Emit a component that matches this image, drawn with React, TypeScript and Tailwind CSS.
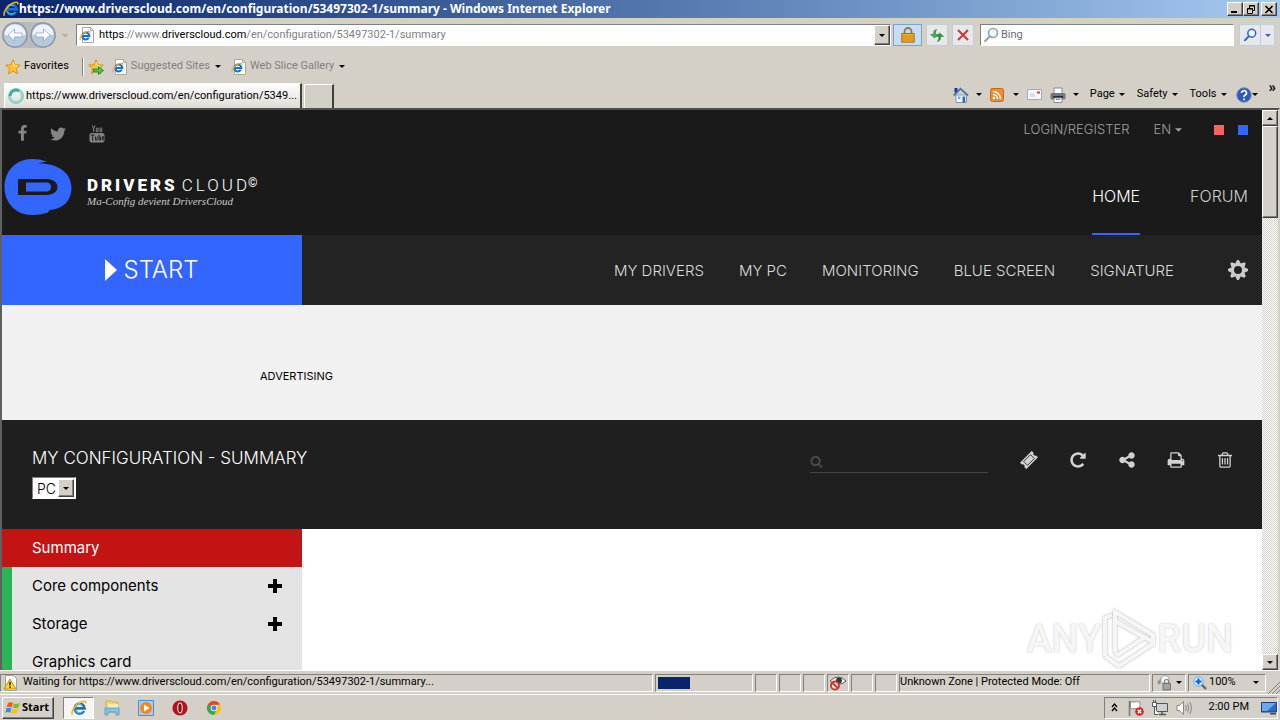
import type { ReactNode } from "react";

const UI = "font-['Roboto','Liberation_Sans',sans-serif]";
const WEB = "font-['Inter','Liberation_Sans',sans-serif]";
const RAISED = "border border-t-white border-l-white border-r-[#404040] border-b-[#404040] bg-[#d4d0c8] shadow-[inset_-1px_-1px_0_#808080]";
const SUNKEN = "border border-t-[#808080] border-l-[#808080] border-r-white border-b-white";

function Caret({ className = "" }: { className?: string }) {
  return (
    <svg viewBox="0 0 6 3" className={"h-[3px] w-[6px] shrink-0 " + className} fill="currentColor" aria-hidden="true">
      <path d="M0 0h6L3 3z" />
    </svg>
  );
}

function Glyph({ d, className }: { d: string; className: string }) {
  return (
    <svg viewBox="0 0 1792 1792" className={className} fill="currentColor" aria-hidden="true">
      <path d={d} />
    </svg>
  );
}

const FACEBOOK = "M1343 12v264h-157q-86 0-116 36t-30 108v189h293l-39 296h-254v759h-306v-759h-255v-296h255v-218q0-186 104-288.5t277-102.5q147 0 228 12z";
const TWITTER = "M1684 408q-67 98-162 167 1 14 1 42 0 130-38 259.5t-115.5 248.5-184.5 210.5-258 146-323 54.5q-271 0-496-145 35 4 78 4 225 0 401-138-105-2-188-64.5t-114-159.5q33 5 61 5 43 0 85-11-112-23-185.5-111.5t-73.5-205.5v-4q68 38 146 41-66-44-105-115t-39-154q0-88 44-163 121 149 294.5 238.5t371.5 99.5q-8-38-8-74 0-134 94.5-228.5t228.5-94.5q140 0 236 102 109-21 205-78-37 115-142 178 93-10 186-50z";
const REPEAT = "M1664 256v448q0 26-19 45t-45 19h-448q-42 0-59-40-17-39 14-69l138-138q-148-137-349-137-104 0-198.5 40.5t-163.5 109.5-109.5 163.5-40.5 198.5 40.5 198.5 109.5 163.5 163.5 109.5 198.5 40.5q119 0 225-52t179-147q7-10 23-12 15 0 25 9l137 138q9 8 9.5 20.5t-7.5 22.5q-109 132-264 204.5t-327 72.5q-156 0-298-61t-245-164-164-245-61-298 61-298 164-245 245-164 298-61q147 0 284.5 55.5t244.5 156.5l130-129q29-31 70-14 39 17 39 59z";
const SHARE = "M1344 1024q133 0 226.5 93.5t93.5 226.5-93.5 226.5-226.5 93.5-226.5-93.5-93.5-226.5q0-12 2-34l-360-180q-92 86-218 86-133 0-226.5-93.5t-93.5-226.5 93.5-226.5 226.5-93.5q126 0 218 86l360-180q-2-22-2-34 0-133 93.5-226.5t226.5-93.5 226.5 93.5 93.5 226.5-93.5 226.5-226.5 93.5q-126 0-218-86l-360 180q2 22 2 34t-2 34l360 180q92-86 218-86z";
const PRINT = "M448 1536h896v-256h-896v256zm0-640h896v-384h-160q-40 0-68-28t-28-68v-160h-640v640zm1152 64q0-26-19-45t-45-19-45 19-19 45 19 45 45 19 45-19 19-45zm128 0v416q0 13-9.5 22.5t-22.5 9.5h-224v160q0 40-28 68t-68 28h-960q-40 0-68-28t-28-68v-160h-224q-13 0-22.5-9.5t-9.5-22.5v-416q0-79 56.5-135.5t135.5-56.5h64v-544q0-40 28-68t68-28h672q40 0 88 20t76 48l152 152q28 28 48 76t20 88v256h64q79 0 135.5 56.5t56.5 135.5z";
const TRASH = "M704 736v576q0 14-9 23t-23 9h-64q-14 0-23-9t-9-23v-576q0-14 9-23t23-9h64q14 0 23 9t9 23zm256 0v576q0 14-9 23t-23 9h-64q-14 0-23-9t-9-23v-576q0-14 9-23t23-9h64q14 0 23 9t9 23zm256 0v576q0 14-9 23t-23 9h-64q-14 0-23-9t-9-23v-576q0-14 9-23t23-9h64q14 0 23 9t9 23zm128 724v-948h-896v948q0 22 7 40.5t14.5 27 10.5 8.5h832q3 0 10.5-8.5t14.5-27 7-40.5zm-672-1076h448l-48-117q-7-9-17-11h-317q-10 2-17 11zm928 32v64q0 14-9 23t-23 9h-96v948q0 83-47 143.5t-113 60.5h-832q-66 0-113-58.5t-47-141.5v-952h-96q-14 0-23-9t-9-23v-64q0-14 9-23t23-9h309l70-167q15-37 54-63t79-26h320q40 0 79 26t54 63l70 167h309q14 0 23 9t9 23z";
const SEARCH = "M1216 832q0-185-131.5-316.5t-316.5-131.5-316.5 131.5-131.5 316.5 131.5 316.5 316.5 131.5 316.5-131.5 131.5-316.5zm512 832q0 52-38 90t-90 38q-54 0-90-38l-343-342q-179 124-399 124-143 0-273.5-55.5t-225-150-150-225-55.5-273.5 55.5-273.5 150-225 225-150 273.5-55.5 273.5 55.5 225 150 150 225 55.5 273.5q0 220-124 399l343 343q37 37 37 90z";

function IELogo({ className = "h-4 w-4" }: { className?: string }) {
  return (
    <svg viewBox="0 0 16 16" className={"shrink-0 " + className} fill="none" aria-hidden="true">
      <path d="M13 11a5 5 0 1 1 .6-2.6H5" stroke="#1b6fd0" strokeWidth="2.6" />
      <path d="M12 10.8a4.5 4.5 0 0 1-8-.6M4 6.5a4.6 4.6 0 0 1 7-1.4" stroke="#7cc9ff" strokeWidth=".9" />
      <path d="M1.5 14.8C-.5 12 4.500 4.500 10 2c3-1.400 5.500-1.200 4.600 1.400" stroke="#f2b61c" strokeWidth="1.500" />
    </svg>
  );
}

function IEPage() {
  return (
    <svg viewBox="0 0 16 16" className="h-4 w-4 shrink-0" fill="none" aria-hidden="true">
      <path d="M3.500 .5h8l3 3v12h-11z" fill="#fff" stroke="#a8a8a8" />
      <path d="M11.500 .5v3h3" stroke="#a8a8a8" />
      <path d="M9.800 10.800a3.500 3.500 0 1 1 .5-1.900H4" stroke="#1b6fd0" strokeWidth="2" />
      <path d="M1.200 12.800c-1-2 2.800-6.500 6.300-8 2-.8 3.800-.6 3.200.9" stroke="#e9ae20" strokeWidth="1.200" />
    </svg>
  );
}

function Star({ add = false }: { add?: boolean }) {
  return (
    <svg viewBox="0 0 16 16" className="h-4 w-4 shrink-0" aria-hidden="true">
      <path d="M8 .8l2 4.900 5.300.4-4 3.500 1.300 5.200L8 12l-4.600 2.800 1.300-5.200-4-3.500L6 5.700z" fill="#fdc52f" stroke="#d98a10" strokeWidth=".9" />
      <path d="M8 3l1.200 3.600 3.300.3" fill="none" stroke="#fff2a8" />
      {add && <path d="M5.500 10h5V7.500l5 4-5 4V13h-5z" fill="#45c64a" stroke="#16812a" strokeWidth=".8" />}
    </svg>
  );
}

function RoundArrow({ flip = false }: { flip?: boolean }) {
  return (
    <svg viewBox="0 0 26 26" className={flip ? "h-[26px] w-[26px] rotate-180" : "h-[26px] w-[26px]"} aria-hidden="true">
      <circle cx="13" cy="13" r="12" fill="#c3d0e0" stroke="#8d94a1" strokeWidth="1.500" />
      <path d="M2.500 13a10.500 10.500 0 0 1 21 0q-10 3-21 0z" fill={flip ? "#b4c8de" : "#eef3f9"} />
      <path d="M2.500 13a10.500 10.500 0 0 0 21 0q-10 3-21 0z" fill={flip ? "#eef3f9" : "#b4c8de"} />
      <path d="M6 13l6.500-6v4H20v4h-7.500v4z" fill="#fff" stroke="#8fa3bb" strokeWidth=".8" />
    </svg>
  );
}

function Magnifier({ color, className }: { color: string; className: string }) {
  return (
    <svg viewBox="0 0 16 16" className={"shrink-0 " + className} fill="none" aria-hidden="true">
      <circle cx="10" cy="6" r="4.500" fill="#eef7ff" stroke={color} strokeWidth="1.700" />
      <path d="M6.800 9.300L1.500 14.700" stroke={color} strokeWidth="2.300" />
    </svg>
  );
}

function TitleBar() {
  return (
    <header className="flex h-[18px] shrink-0 items-center justify-between bg-linear-to-r from-[#0a246a] to-[#a6caf0] pr-[3px] pl-[3px]">
      <h1 className="flex items-center text-[12px] leading-4 font-bold whitespace-nowrap text-white font-['Noto_Sans',sans-serif]">
        <IELogo />
        https://www.driverscloud.com/en/configuration/53497302-1/summary - Windows Internet Explorer
      </h1>
      <div className="flex text-black">
        <button aria-label="Minimize" className={"flex h-[14px] w-4 items-center justify-center " + RAISED}>
          <svg viewBox="0 0 10 9" className="h-[9px] w-[10px]"><path d="M1 6h6v2H1z" /></svg>
        </button>
        <button aria-label="Restore" className={"flex h-[14px] w-4 items-center justify-center " + RAISED}>
          <svg viewBox="0 0 10 9" className="h-[9px] w-[10px]" fill="none" stroke="#000"><path d="M3.500 3V.5h5v5H7M3 1h6M1.500 3.500h5v5h-5zM1 4h6" /></svg>
        </button>
        <button aria-label="Close" className={"ml-[2px] flex h-[14px] w-4 items-center justify-center " + RAISED}>
          <svg viewBox="0 0 10 9" className="h-[9px] w-[10px]" fill="none" stroke="#000" strokeWidth="1.600"><path d="M1.500 1l7 7M8.500 1l-7 7" /></svg>
        </button>
      </div>
    </header>
  );
}

function NavBar() {
  const btn = "flex h-[22px] items-center justify-center border border-[#c5ccd6] bg-[#e6e8ec]";
  return (
    <div className="flex h-[34px] shrink-0 items-center pr-[5px] pl-[2px]">
      <div className="flex gap-[2px] rounded-full bg-[#b9bac0]">
        <button aria-label="Back"><RoundArrow /></button>
        <button aria-label="Forward"><RoundArrow flip /></button>
      </div>
      <button aria-label="Recent pages" className="mr-2 ml-[6px] text-[#b4b0a8]"><Caret className="scale-125" /></button>
      <div className={"flex h-[22px] min-w-0 flex-1 items-center bg-white pl-[2px] " + SUNKEN}>
        <IEPage />
        <div role="textbox" aria-label="Address" tabIndex={0} className="ml-1 flex-1 truncate text-[11px] text-[#808080]">
          <span className="text-black">https</span>://www.<span className="text-black">driverscloud.com</span>/en/configuration/53497302-1/summary
        </div>
        <button aria-label="Show addresses" className={"flex h-5 w-4 items-center justify-center " + RAISED}><Caret /></button>
      </div>
      <button aria-label="Security report" className="ml-[2px] flex h-[22px] w-[29px] items-center justify-center border border-[#7da2ce] bg-[#c6dcf7]">
        <svg viewBox="0 0 14 16" className="h-4 w-[14px]">
          <path d="M3.500 7V4.500a3.500 3.500 0 0 1 7 0V7" fill="none" stroke="#8b7a50" strokeWidth="1.800" />
          <path d="M.8 6.500h12.400v8.700H.8z" fill="#f0b02c" stroke="#a86d0c" />
          <path d="M1.500 9h11M1.500 11h11M1.500 13h11" stroke="#c4810f" strokeWidth=".8" />
        </svg>
      </button>
      <button aria-label="Refresh" className={"ml-1 w-[22px] " + btn}>
        <svg viewBox="0 0 16 16" className="h-4 w-4" aria-hidden="true">
          <path d="M7.500 2.500q-3.500.5-3 5H1.500L5.700 11 9 7.500H6.500q-.3-3 1-5z" fill="#4fae4f" stroke="#1f7f2b" strokeWidth=".6" />
          <path d="M8.500 14.500q3.500-.5 3-5h3L10.700 6 7.500 9.500H10q.3 3-1.500 5z" fill="#2f9438" stroke="#1f7f2b" strokeWidth=".6" />
        </svg>
      </button>
      <button aria-label="Stop" className={"ml-1 w-[22px] " + btn}>
        <svg viewBox="0 0 12 12" className="h-3 w-3" stroke="#cf3535" strokeWidth="2"><path d="M1 1l10 10M11 1L1 11" /></svg>
      </button>
      <label className={"ml-[6px] flex h-[22px] w-[254px] items-center gap-[2px] bg-white px-[2px] " + SUNKEN}>
        <Magnifier color="#9aa5b2" className="h-4 w-4" />
        <input aria-label="Search Bing" placeholder="Bing" className="min-w-0 flex-1 text-[11px] outline-none placeholder:text-[#6d6d6d]" />
      </label>
      <button aria-label="Search" className={"ml-[5px] w-[22px] " + btn}><Magnifier color="#2f64c4" className="h-[14px] w-[14px]" /></button>
      <button aria-label="Search options" className={"w-[14px] border-l-0 text-[#2f64c4] " + btn}><Caret /></button>
    </div>
  );
}

function FavoritesBar() {
  return (
    <div className="flex h-[29px] shrink-0 items-center pl-[5px] text-[11px]">
      <button className="flex items-center gap-[3px]"><Star /> Favorites</button>
      <div className="mr-[4px] ml-[13px] h-[18px] w-[2px] border-l border-[#808080] bg-white" />
      <button aria-label="Add to favorites bar"><Star add /></button>
      <button className="ml-2 flex items-center gap-[3px] text-[#808080]"><IEPage /> Suggested Sites <Caret className="ml-[2px] text-black" /></button>
      <button className="ml-[10px] flex items-center gap-[3px] text-[#808080]"><IEPage /> Web Slice Gallery <Caret className="ml-[2px] text-black" /></button>
    </div>
  );
}

function TabBar() {
  return (
    <div className="flex h-[27px] shrink-0 items-end pr-1 pl-1 text-[11px]">
      <button className="flex h-[25px] w-[298px] items-center gap-[2px] border border-t-white border-r-2 border-b-0 border-l-white border-r-[#404040] bg-linear-to-b from-white to-[#dedbd5] pl-[3px]">
        <svg viewBox="0 0 16 16" className="h-4 w-4 shrink-0" fill="none" aria-hidden="true">
          <circle cx="8" cy="8" r="6" stroke="#a5ddd5" strokeWidth="3" />
          <path d="M2 8a6 6 0 0 1 9-5" stroke="#3cae9d" strokeWidth="2.500" />
          <circle cx="8" cy="8" r="7.300" stroke="#4d9f96" strokeWidth=".6" />
        </svg>
        <span className="whitespace-nowrap">https://www.driverscloud.com/en/configuration/5349...</span>
      </button>
      <button aria-label="New tab" className="ml-[2px] h-6 w-[30px] border border-t-white border-r-2 border-b-0 border-l-white border-r-[#404040] bg-[#d4d0c8]" />
      <div className="ml-auto flex h-full items-center gap-[6px]">
        <button aria-label="Home" className="flex items-center gap-[7px]">
          <svg viewBox="0 0 16 16" className="h-4 w-4"><path d="M3 8h10.500v7.500H3z" fill="#f4f8fc" stroke="#8a96a8" /><path d="M.8 8.500L7.500 1.700 15 8.500" fill="none" stroke="#4d74ad" strokeWidth="1.800" /><path d="M1.500 1h3v3l-3 2z" fill="#26359b" /><path d="M9.500 9.500h2.700v6H9.500z" fill="#3668a8" /><path d="M5 9.500h2.500V12H5z" fill="#79a7d8" /></svg>
          <Caret />
        </button>
        <button aria-label="Feeds" className="ml-[2px] flex items-center gap-[9px]">
          <svg viewBox="0 0 14 14" className="h-[14px] w-[14px]" fill="none" stroke="#fff" strokeWidth="1.500"><rect x=".5" y=".5" width="13" height="13" rx="2" fill="#f08a33" stroke="#c76615" strokeWidth="1" /><path d="M3 6.500A4.500 4.500 0 0 1 7.500 11M3 3.500A7.500 7.500 0 0 1 10.500 11" /><circle cx="4" cy="10" r=".6" fill="#fff" /></svg>
          <Caret />
        </button>
        <button aria-label="Read mail" className="ml-[2px]">
          <svg viewBox="0 0 15 11" className="h-[11px] w-[15px]"><path d="M.5.500h14v10H.5z" fill="#f5f6f9" stroke="#a6a9b1" /><path d="M10 2.500h3v2h-3z" fill="#c63b55" /><path d="M3 5h4M3 7h5" stroke="#b9c4dd" /></svg>
        </button>
        <button aria-label="Print" className="ml-[2px] flex items-center gap-[7px]">
          <svg viewBox="0 0 16 16" className="h-4 w-4"><path d="M4 1h8v6H4z" fill="#fff" stroke="#8c8c8c" /><rect x=".5" y="6" width="15" height="6.500" rx="1.500" fill="#727781" /><path d="M3 9h10v2H3z" fill="#282c33" /><path d="M4 11h8v4.500H4z" fill="#fff" stroke="#8c8c8c" /><path d="M6 12.500h4" stroke="#5c93cf" /></svg>
          <Caret />
        </button>
        <button className="ml-[5px] flex items-center gap-1">Page <Caret /></button>
        <button className="ml-[6px] flex items-center gap-1">Safety <Caret /></button>
        <button className="ml-[6px] flex items-center gap-1">Tools <Caret /></button>
        <button aria-label="Help" className="ml-[3px] flex items-center">
          <svg viewBox="0 0 16 16" className="h-4 w-4"><circle cx="8" cy="8" r="7.200" fill="#3159b5" stroke="#6f84b5" /><path d="M5.500 6a2.500 2.300 0 1 1 3.600 2.100Q8 8.600 8 10M8 11.500v1.800" fill="none" stroke="#fff" strokeWidth="1.700" /></svg>
          <Caret />
        </button>
        <button aria-label="More commands" className="ml-[5px] self-start text-[15px] leading-3 font-bold">»</button>
      </div>
    </div>
  );
}

function BrandLogo() {
  return (
    <a href="#home" className="flex items-center gap-[15px] text-white">
      <svg viewBox="0 0 68 56" className="h-14 w-[68px]" aria-hidden="true">
        <path d="M28 0C34 0 38 .8 42.500 2.500L34 4.500C54 4 67.500 14 67.500 29c0 12-8 21-21.500 22l-4.500 1.500 6-4.500-3.500 5.500C39 55.200 34 56 28 56 12 56 .5 44 .5 28S12 0 28 0z" fill="#36f" />
        <path d="M14 20h28c8 0 11.500 4 11.500 8S50 36 42 36H14z" fill="#1a1a1a" />
        <path d="M22 23.500h20c3.500 0 5 2 5 4.500s-1.500 4.500-5 4.500H22z" fill="#36f" />
      </svg>
      <span className="flex flex-col pt-2">
        <span className="flex items-start gap-1 text-[17px] leading-5 font-['Roboto','Liberation_Sans',sans-serif]">
          <b className="font-black tracking-[3px]">DRIVERS</b>
          <span className="font-light tracking-[3px]">CLOUD</span>
          <span className="-ml-[6px] text-[12px] leading-4">©</span>
        </span>
        <span className="text-[11px] leading-3 text-[#c9c9c9] italic font-['Liberation_Serif',serif]">Ma-Config devient DriversCloud</span>
      </span>
    </a>
  );
}

function SiteHeader() {
  return (
    <div className="flex h-[125px] shrink-0 justify-between bg-[#1a1a1a] pr-[14px]">
      <div className="flex flex-col pt-[15px] pl-[2px]">
        <div className="mb-[17px] flex h-[17px] items-center pl-[10px] text-[#858585]">
          <a href="#facebook" aria-label="Facebook"><Glyph d={FACEBOOK} className="h-[17px] w-[17px]" /></a>
          <a href="#twitter" aria-label="Twitter" className="ml-[18px]"><Glyph d={TWITTER} className="h-[18px] w-[18px]" /></a>
          <a href="#youtube" aria-label="YouTube" className="ml-[22px]">
            <svg viewBox="0 0 16 18" className="h-[18px] w-4" aria-hidden="true">
              <path d="M3.300.5l1.300 3.500v3M6 .5L4.600 4M7.300 3.200h1.800V6.500H7.300zM11 2.500v4h1.700v-4" fill="none" stroke="currentColor" />
              <rect x=".5" y="8" width="15" height="9.500" rx="2" fill="currentColor" />
              <path d="M2 10h3.500M3.700 10v6M6.500 11.500V15h1.700v-3.500M10 9.500V15h1.500v-3H10M15 15h-1.700v-3.300h1.400v1.600h-1.400" fill="none" stroke="#1a1a1a" strokeWidth=".9" />
            </svg>
          </a>
        </div>
        <BrandLogo />
      </div>
      <div className="flex flex-col items-end">
        <div className="flex h-10 items-center text-[13px] font-light text-[#a0a0a0]">
          <a href="#login">LOGIN/REGISTER</a>
          <button className="ml-6 flex items-center gap-1">EN <Caret className="h-[4px] w-[7px]" /></button>
          <button aria-label="Red theme" className="ml-8 h-[10px] w-[10px] bg-[#ff6163]" />
          <button aria-label="Blue theme" className="ml-[14px] h-[10px] w-[10px] bg-[#36f]" />
        </div>
        <nav className="flex flex-1 gap-[50px] text-[16px] leading-5 font-light text-[#d0d0d0]">
          <a href="#home" className="border-b-2 border-[#36f] pt-9 text-white">HOME</a>
          <a href="#forum" className="pt-9">FORUM</a>
        </nav>
      </div>
    </div>
  );
}

function MainMenu() {
  const items = ["MY DRIVERS", "MY PC", "MONITORING", "BLUE SCREEN", "SIGNATURE"];
  return (
    <div className="flex h-[70px] shrink-0 items-stretch justify-between bg-[#232323] pr-[14px]">
      <button className="flex w-[300px] items-center justify-center gap-[6px] bg-[#36f] text-[24px] font-light text-white">
        <svg viewBox="0 0 12 22" className="h-[22px] w-3" fill="currentColor" aria-hidden="true"><path d="M0 0l12 11L0 22z" /></svg>
        START
      </button>
      <nav className="flex items-center gap-[35px] text-[15px] font-light text-[#dcdcdc]">
        {items.map((t) => <a key={t} href="#menu" className="pt-[2px]">{t}</a>)}
        <button aria-label="Settings" className="ml-[19px] text-[#ccc]">
          <svg viewBox="-10 -10 20 20" className="h-5 w-5" aria-hidden="true">
            <circle r="5.600" fill="none" stroke="currentColor" strokeWidth="3.200" />
            {[0, 45, 90, 135, 180, 225, 270, 315].map((a) => (
              <path key={a} d="M-2.700-6.500L-.9-10H.9L2.700-6.500z" transform={`rotate(${a})`} fill="currentColor" />
            ))}
          </svg>
        </button>
      </nav>
    </div>
  );
}

function ConfigHeader() {
  return (
    <div className="flex h-[109px] shrink-0 items-start justify-between bg-[#1f1f1f] pr-7 pl-[30px]">
      <div className="pt-7">
        <h2 className="text-[17px] leading-5 font-light text-white">MY CONFIGURATION - SUMMARY</h2>
        <div className="relative mt-[9px] h-[22px] w-11">
          <select aria-label="Device" className={"block h-[22px] w-full appearance-none bg-white pl-1 text-[14px] text-black font-light " + SUNKEN}>
            <option>PC</option>
          </select>
          <span className={"pointer-events-none absolute top-[2px] right-[2px] flex h-[18px] w-4 items-center justify-center " + RAISED}><Caret /></span>
        </div>
      </div>
      <div className="flex items-start text-[#d2d2d2]">
        <label className="mt-[31px] mr-8 flex h-[22px] w-[178px] items-center border-b border-[#454545] text-[#4c4c4c]">
          <Glyph d={SEARCH} className="h-[13px] w-[13px]" />
          <input aria-label="Search configuration" className="min-w-0 flex-1 outline-none" />
        </label>
        <div className="mt-[31px] flex gap-[31px]">
          <button aria-label="Tickets">
            <svg viewBox="0 0 18 18" className="h-[18px] w-[18px]" aria-hidden="true">
              <g transform="rotate(-45 9 9)">
                <path d="M.7 4.500h16.600v2.700a1.900 1.900 0 0 0 0 3.600v2.700H.7v-2.700a1.900 1.900 0 0 0 0-3.600z" fill="currentColor" />
                <path d="M4.200 6.300h9.600v5.400H4.200z" fill="none" stroke="#1f1f1f" strokeWidth=".8" />
              </g>
            </svg>
          </button>
          <button aria-label="Reload"><Glyph d={REPEAT} className="h-[18px] w-[18px]" /></button>
          <button aria-label="Share"><Glyph d={SHARE} className="h-[18px] w-[18px]" /></button>
          <button aria-label="Print configuration"><Glyph d={PRINT} className="h-[18px] w-[18px]" /></button>
          <button aria-label="Delete"><Glyph d={TRASH} className="h-[18px] w-[18px]" /></button>
        </div>
      </div>
    </div>
  );
}

function Watermark() {
  return (
    <div className="absolute right-[29px] bottom-0 flex items-center text-[38px] leading-[58px] font-medium text-[#f6f6f6] font-['Roboto',sans-serif] [text-shadow:0_0_2px_#bbb]">
      <span>ANY</span>
      <svg viewBox="0 0 56 62" className="h-[62px] w-14 overflow-visible drop-shadow-[0_0_1px_#aaa]" fill="none" stroke="#f6f6f6" strokeWidth="4" aria-hidden="true">
        <path d="M4 48V10l7-3M4 48l14 10 35-23" />
        <path d="M14 44V4l38 23v7L14 13M14 44l3 3 27-18" />
      </svg>
      <span>RUN</span>
    </div>
  );
}

function Body() {
  const items = [
    { name: "Core components", more: true },
    { name: "Storage", more: true },
    { name: "Graphics card", more: false },
  ];
  return (
    <div className="relative flex min-h-0 flex-1 overflow-hidden bg-white">
      <ul className="w-[300px] shrink-0 text-[15px] text-black">
        <li className="h-[38px] bg-[#c41313]"><a href="#summary" className="flex h-full items-center pl-[30px] text-white">Summary</a></li>
        {items.map((i) => (
          <li key={i.name} className="flex h-[38px] items-center justify-between border-l-10 border-[#2bb457] bg-[#e4e4e4] pr-5 pl-5">
            <a href="#section">{i.name}</a>
            {i.more && (
              <button aria-label={"Expand " + i.name}>
                <svg viewBox="0 0 14 14" className="h-[14px] w-[14px]"><path d="M5 0h4v5h5v4H9v5H5V9H0V5h5z" /></svg>
              </button>
            )}
          </li>
        ))}
      </ul>
      <Watermark />
    </div>
  );
}

function ScrollBar() {
  return (
    <div className="flex w-4 shrink-0 flex-col bg-[repeating-conic-gradient(#fff_0_25%,#d4d0c8_0_50%)] bg-size-[2px_2px]">
      <button aria-label="Scroll up" className={"flex h-4 items-center justify-center " + RAISED}><Caret className="rotate-180" /></button>
      <div className={"h-[92px] " + RAISED} />
      <button aria-label="Scroll down" className={"mt-auto flex h-4 items-center justify-center " + RAISED}><Caret /></button>
    </div>
  );
}

function Cell({ className, children }: { className: string; children?: ReactNode }) {
  return <div className={"flex h-[18px] items-center border border-t-[#808080] border-l-[#808080] border-r-white border-b-white " + className}>{children}</div>;
}

function StatusBar() {
  return (
    <footer className="flex h-6 shrink-0 items-center gap-[2px] border-t border-white text-[11px] whitespace-nowrap">
      <Cell className="min-w-0 flex-1 gap-[4px] pl-[2px]">
        <svg viewBox="0 0 16 16" className="h-4 w-4 shrink-0"><path d="M2.500.5h8l3 3v12h-11z" fill="#fff" stroke="#a0a0a0" /><path d="M7 4l6 10H1z" fill="#ffd91f" stroke="#b89300" /><path d="M7 7v3.500M7 11.500v1.500" stroke="#000" strokeWidth="1.300" /></svg>
        Waiting for https://www.driverscloud.com/en/configuration/53497302-1/summary...
      </Cell>
      <Cell className="w-[98px] pl-[2px]"><div className="h-3 w-8 bg-[#0a246a]" /></Cell>
      <Cell className="w-[22px]" /><Cell className="w-[22px]" /><Cell className="w-[22px]" />
      <Cell className="w-[22px] justify-center">
        <svg viewBox="0 0 18 16" className="h-4 w-[18px]" fill="none"><path d="M1 6q8-8 16 0-8 7-16 0z" fill="#fff" stroke="#555" /><circle cx="10" cy="5.500" r="3" fill="#33363c" /><circle cx="6" cy="10.500" r="4" fill="#fff" fillOpacity=".7" stroke="#d42b2b" strokeWidth="1.800" /><path d="M3.200 8l5.600 5" stroke="#d42b2b" strokeWidth="1.800" /></svg>
      </Cell>
      <Cell className="w-[22px]" /><Cell className="w-[22px]" />
      <Cell className="w-[251px]">Unknown Zone | Protected Mode: Off</Cell>
      <Cell className="w-[34px] justify-between px-[3px]">
        <svg viewBox="0 0 16 16" className="h-4 w-4"><path d="M1 7l4-4 2 2-4 5z" fill="#8e9299" /><path d="M5 4a4 3.500 0 0 1 8 0v4H5z" fill="#f6f6f6" stroke="#aaa" /><path d="M8.500 8V6.500a2 2 0 0 1 4 0V8" fill="none" stroke="#777" strokeWidth="1.200" /><path d="M7 8.500h7.500V15H7z" fill="#a2a3a6" stroke="#707275" /></svg>
        <Caret />
      </Cell>
      <Cell className="w-[78px] gap-[2px] pl-[4px]">
        <svg viewBox="0 0 14 14" className="h-[14px] w-[14px]" fill="none"><path d="M8.500 8.500L13 13" stroke="#5d6470" strokeWidth="2.400" /><circle cx="5.500" cy="5.500" r="4.700" fill="#d9efff" stroke="#5da5e0" /><path d="M5.500 2.500v6M2.500 5.500h6" stroke="#0e60bd" strokeWidth="2" /></svg>
        100% <Caret className="mr-[6px] ml-auto" />
      </Cell>
      <svg viewBox="0 0 12 14" className="h-[14px] w-3 self-end" stroke="#808080" aria-hidden="true"><path d="M0 14L12 2M4 14l8-8M8 14l4-4" /></svg>
    </footer>
  );
}

function TaskBar() {
  return (
    <div className="flex h-[26px] shrink-0 items-center border-t border-white pl-[2px] text-[11px]">
      <button className={"flex h-[22px] w-[52px] items-center gap-px pl-[2px] text-[11px] font-bold font-['Noto_Sans',sans-serif] " + RAISED}>
        <svg viewBox="0 0 16 16" className="h-4 w-4 shrink-0" aria-hidden="true"><path d="M3 3q2.500-1.500 5 0L6.800 7.300q-2.500-1.300-5 0z" fill="#ef5b22" /><path d="M8.800 3.500q2.700 1.300 6-.4L13.500 7.500q-3 1.400-5.700 0z" fill="#83bb2a" /><path d="M1.500 8.300q2.500-1.300 5 0l-1.200 4.500q-2.500-1.400-5 0z" fill="#3a8cdd" /><path d="M7.500 8.500q2.700 1.400 5.700 0L12 13q-3 1.500-5.700 0z" fill="#fbc11b" /></svg>
        Start
      </button>
      <button aria-label="Internet Explorer" className={"ml-[9px] flex h-[22px] w-[31px] items-center justify-center bg-[#f6f5f3] " + SUNKEN}><IELogo /></button>
      <button aria-label="Explorer" className="ml-[10px]">
        <svg viewBox="0 0 16 16" className="h-4 w-4"><path d="M2 1h5l1 1h6v10H2z" fill="#f2d674" stroke="#c3a548" strokeWidth=".8" /><path d="M4 4h10v6H4z" fill="#fbeeb2" /><path d="M1 8h14v7h-3v-3H4v3H1z" fill="#83c1e8" stroke="#5797c4" strokeWidth=".8" /></svg>
      </button>
      <button aria-label="Media Player" className="ml-[18px]">
        <svg viewBox="0 0 16 16" className="h-4 w-4"><path d="M.5.500h15v15H.5z" fill="#a5cdf2" stroke="#4b8fce" /><circle cx="8" cy="8" r="6" fill="#f5851f" /><path d="M6 4.500l5.500 3.500L6 11.500z" fill="#fff" /></svg>
      </button>
      <button aria-label="Opera" className="ml-[18px]">
        <svg viewBox="0 0 16 16" className="h-4 w-4"><circle cx="8" cy="8" r="7.600" fill="#b5131c" /><ellipse cx="8" cy="8" rx="2.200" ry="5" fill="#7c0b12" stroke="#f3dcdc" strokeWidth="1.200" /></svg>
      </button>
      <button aria-label="Chrome" className="ml-[18px]">
        <svg viewBox="0 0 16 16" className="h-4 w-4"><circle cx="8" cy="8" r="7" fill="#fbc21a" /><path d="M8 8L1.900 4.500A7 7 0 0 1 14.100 4.500L8 5z" fill="#e24435" /><path d="M8 8L1.900 4.500A7 7 0 0 0 8 15l2.500-5z" fill="#34a455" /><circle cx="8" cy="8" r="3.300" fill="#fff" /><circle cx="8" cy="8" r="2.500" fill="#4285f4" /></svg>
      </button>
      <div className={"mr-[2px] ml-auto flex h-[22px] items-center pl-[6px] " + SUNKEN}>
        <button aria-label="Show hidden icons">
          <svg viewBox="0 0 7 9" className="h-[9px] w-[7px]" fill="none" stroke="#000" strokeWidth="1.300"><path d="M1 4l2.500-3L6 4M1 8l2.500-3L6 8" /></svg>
        </button>
        <svg viewBox="0 0 16 16" className="ml-[10px] h-4 w-4" aria-hidden="true"><path d="M1.500 1v15" stroke="#777" strokeWidth="1.500" /><path d="M2.500 1.500q3 1.500 6-.2 2 1 3.500.7v7q-3 .5-5-.5-2 1-4.500 0z" fill="#fff" stroke="#888" /><circle cx="11.500" cy="11.500" r="4.300" fill="#d7262b" /><path d="M9.800 9.800l3.400 3.400M13.200 9.800l-3.400 3.400" stroke="#fff" strokeWidth="1.300" /></svg>
        <svg viewBox="0 0 16 16" className="ml-2 h-4 w-4" aria-hidden="true"><path d="M4.500 3.500h11v8h-11z" fill="#cdd0d3" stroke="#555" /><path d="M7 14.500h7M10 12v2" stroke="#555" strokeWidth="1.500" /><path d="M.5 2.500h4v4h-4zM1.500 0v2M3.500 0v2M2.500 7v7.500H6" fill="#fff" stroke="#555" /></svg>
        <svg viewBox="0 0 17 16" className="ml-2 h-4 w-[17px]" fill="none" stroke="#888" aria-hidden="true"><path d="M1 5.500h2.500L7.500 1.500v13l-4-4H1z" fill="#fff" /><path d="M9.500 5q1.500 3 0 6M11.500 3.500q2.500 4.500 0 9M13.800 2q3.200 6 0 12" /></svg>
        <time className="mr-3 ml-4 whitespace-nowrap">2:00 PM</time>
        <button aria-label="Show desktop">
          <svg viewBox="0 0 16 14" className="h-[14px] w-4"><path d="M.5 1.500h15v9.500H.5z" fill="#286dc5" stroke="#173f83" /><path d="M1 2h14l-9 8H1z" fill="#68a9e7" /><path d="M9 12h6v1.500H9z" fill="#414a59" /></svg>
        </button>
      </div>
    </div>
  );
}

export default function App() {
  return (
    <div className={"flex h-screen flex-col overflow-hidden bg-[#d4d0c8] text-black " + UI}>
      <TitleBar />
      <NavBar />
      <FavoritesBar />
      <TabBar />
      <div className="flex min-h-0 flex-1 border-t-2 border-r-2 border-l-2 border-t-[#505050] border-r-[#d4d0c8] border-l-[#606060]">
        <main className={"flex min-w-0 flex-1 flex-col bg-white " + WEB}>
          <SiteHeader />
          <MainMenu />
          <section className="h-[115px] shrink-0 bg-[#f1f1f1] pt-[63px] pl-[258px] text-[11px] leading-4 text-black">ADVERTISING</section>
          <ConfigHeader />
          <Body />
        </main>
        <ScrollBar />
      </div>
      <StatusBar />
      <TaskBar />
    </div>
  );
}
